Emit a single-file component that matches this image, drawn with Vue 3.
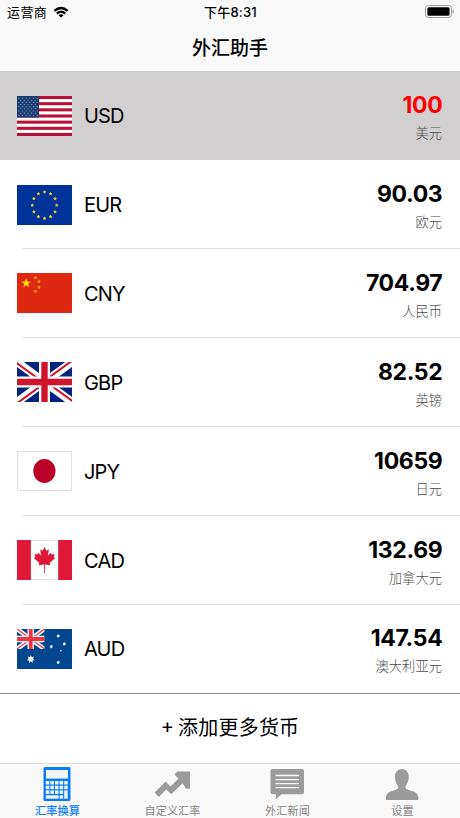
<template>
  <div class="app">
    <header class="top">
      <div class="status-bar">
        <div class="carrier">
          <span>运营商</span>
          <svg class="wifi" viewBox="0 0 16 12">
            <path d="M0.5 4.1 Q8 -2.7 15.5 4.1 L13.9 5.8 Q8 0.6 2.1 5.8 Z" />
            <path d="M3 6.7 Q8 2.3 13 6.7 L11.4 8.4 Q8 5.5 4.6 8.4 Z" />
            <path d="M5.5 9.2 Q8 7.1 10.5 9.2 L8 11.8 Z" />
          </svg>
        </div>
        <div class="clock">下午8:31</div>
        <div class="power">
          <svg class="battery" viewBox="0 0 29 13">
            <rect x="0.5" y="0.5" width="26" height="12" rx="3.2" fill="#fff" stroke="#98989a" />
            <rect x="2.4" y="2.2" width="22.2" height="8.6" rx="1.5" />
            <path d="M27.6 4.6 Q29 5 29 6.5 T27.6 8.4 Z" fill="#98989a" />
          </svg>
        </div>
      </div>
      <h1 class="title">外汇助手</h1>
    </header>

    <main class="list">
      <div
        v-for="item in currencies"
        :key="item.code"
        class="row"
        :class="{ active: item.code === selected }"
        @click="selected = item.code"
      >
        <svg class="flag" viewBox="0 0 55 40" preserveAspectRatio="none">
          <template v-if="item.code === 'USD'">
            <rect width="55" height="40" fill="#fff" />
            <rect v-for="n in 7" :key="n" y="0" width="55" height="3.08" :transform="`translate(0 ${(n - 1) * 6.154})`" fill="#b8123a" />
            <rect width="22" height="21.5" fill="#173b70" />
            <circle v-for="(s, i) in usStars" :key="'s' + i" :cx="s.x" :cy="s.y" r="0.6" fill="#9fb4cc" />
          </template>
          <template v-else-if="item.code === 'EUR'">
            <rect width="55" height="40" fill="#039" />
            <polygon v-for="(s, i) in euStars" :key="i" :points="star(s.x, s.y, 2, 5, 0.5)" fill="#f5cf2a" />
          </template>
          <template v-else-if="item.code === 'CNY'">
            <rect width="55" height="40" fill="#de2910" />
            <polygon :points="star(9.2, 10.2, 5)" fill="#ffde00" />
            <polygon v-for="(s, i) in cnStars" :key="i" :points="star(s[0], s[1], 1.9, 5, 0.45)" fill="#f9bd08" />
          </template>
          <template v-else-if="item.code === 'GBP'">
            <rect width="55" height="40" fill="#00247d" />
            <path d="M0 0 L55 40 M55 0 L0 40" stroke="#fff" stroke-width="8" />
            <path d="M0 0 L27.5 20 L27.5 22.6 L0 2.6 Z M55 0 H51.5 L27.5 17.4 V20 Z M55 40 L27.5 20 V17.4 L55 37.4 Z M0 40 H3.5 L27.5 22.6 V20 Z" fill="#cf142b" />
            <path d="M27.5 0 V40 M0 20 H55" stroke="#fff" stroke-width="11" />
            <path d="M27.5 0 V40 M0 20 H55" stroke="#cf142b" stroke-width="6.4" />
          </template>
          <template v-else-if="item.code === 'JPY'">
            <rect x="0.5" y="0.5" width="54" height="39" fill="#fff" stroke="#dedede" />
            <ellipse cx="27.4" cy="20" rx="11.1" ry="11.9" fill="#bc0026" />
          </template>
          <template v-else-if="item.code === 'CAD'">
            <rect x="0.5" y="0.5" width="54" height="39" fill="#fff" stroke="#e4e4e4" />
            <rect width="13.9" height="40" fill="#e01837" />
            <rect x="41.2" width="13.8" height="40" fill="#e01837" />
            <path
              d="M27.5 7 L29.4 10.8 L31.9 9.5 L30.8 15.8 L34 12.6 L34.6 14.4 L37.5 13.9 L36.7 17.2 L38.2 18.1 L32.7 22.9 L33.3 25.3 L27.9 24.4 V33 H27.1 V24.4 L21.7 25.3 L22.3 22.9 L16.8 18.1 L18.3 17.2 L17.5 13.9 L20.4 14.4 L21 12.6 L24.2 15.8 L23.1 9.5 L25.6 10.8 Z"
              fill="#e01837"
            />
          </template>
          <template v-else>
            <rect width="55" height="40" fill="#00478f" />
            <svg width="27.5" height="20" viewBox="0 0 27.5 20">
              <path d="M0 0 L27.5 20 M27.5 0 L0 20" stroke="#fff" stroke-width="4.4" />
              <path d="M0 0 L27.5 20 M27.5 0 L0 20" stroke="#ef3340" stroke-width="1.2" />
              <path d="M13.75 0 V20 M0 10 H27.5" stroke="#fff" stroke-width="6.4" />
              <path d="M13.75 0 V20 M0 10 H27.5" stroke="#ef3340" stroke-width="3.8" />
            </svg>
            <polygon v-for="(s, i) in auStars" :key="i" :points="star(s[0], s[1], s[2], 7, 0.5)" fill="#fff" />
          </template>
        </svg>
        <span class="code">{{ item.code }}</span>
        <div class="value">
          <span class="amount">{{ item.amount }}</span>
          <span class="name">{{ item.name }}</span>
        </div>
      </div>
    </main>

    <button class="add">
      <span>+</span>
      <span>添加更多货币</span>
    </button>

    <nav class="tabs">
      <div
        v-for="tab in tabs"
        :key="tab.id"
        class="tab"
        :class="{ active: tab.id === activeTab }"
        @click="activeTab = tab.id"
      >
        <svg class="tab-icon" viewBox="0 0 36 36">
          <template v-if="tab.id === 'calc'">
            <rect x="4.5" y="1" width="27" height="34" rx="1.5" />
            <rect x="7" y="4" width="22" height="8.6" class="hole" />
            <rect v-for="k in keypad" :key="k.x + '-' + k.y" :x="k.x" :y="k.y" :width="k.w" :height="k.h" class="hole" />
          </template>
          <path
            v-else-if="tab.id === 'custom'"
            d="M0.6 26.4 L11.6 15.5 L16.5 20.5 L24.5 12.5 L20.4 8.6 L23.2 5.4 H36 V22.8 H32 L28.7 17.2 L17.2 28.3 L12.4 23.6 L4.8 31 Z"
          />
          <template v-else-if="tab.id === 'news'">
            <path d="M3 3 H33 Q35 3 35 5 V26.3 Q35 28.3 33 28.3 H12.5 L6.8 33.3 V28.3 H3.5 Q1.5 28.3 1.5 26.3 V5 Q1.5 3 3 3 Z" />
            <path d="M6.5 9.5 H30 M6.5 13.6 H30 M6.5 17.7 H30 M6.5 21.6 H30" stroke="#f9f9f9" stroke-width="1.3" />
          </template>
          <path
            v-else
            d="M17.8 3 C22.5 3 25 6.5 24.7 11.6 C24.5 15.6 23 18.3 21.6 20.2 C21 21.5 21.5 22.6 23 23.3 C28 25.5 34.5 25.6 34.5 32.5 Q34.5 34 32.8 34 H3.2 Q1.8 34 1.8 32.5 C1.8 25.6 8 25.5 12.8 23.3 C14.3 22.6 14.7 21.5 14.1 20.2 C12.7 18.3 11.2 15.6 11 11.6 C10.7 6.5 13.2 3 17.8 3 Z"
          />
        </svg>
        <span class="tab-label">{{ tab.label }}</span>
      </div>
    </nav>
  </div>
</template>

<script setup>
import { ref } from 'vue'

const selected = ref('USD')
const activeTab = ref('calc')

const currencies = [
  { code: 'USD', amount: '100', name: '美元' },
  { code: 'EUR', amount: '90.03', name: '欧元' },
  { code: 'CNY', amount: '704.97', name: '人民币' },
  { code: 'GBP', amount: '82.52', name: '英镑' },
  { code: 'JPY', amount: '10659', name: '日元' },
  { code: 'CAD', amount: '132.69', name: '加拿大元' },
  { code: 'AUD', amount: '147.54', name: '澳大利亚元' }
]

const tabs = [
  { id: 'calc', label: '汇率换算' },
  { id: 'custom', label: '自定义汇率' },
  { id: 'news', label: '外汇新闻' },
  { id: 'settings', label: '设置' }
]

// polygon points for a star with the given centre and outer radius
const star = (cx, cy, r, tips = 5, inner = 0.4) => {
  const points = []
  for (let i = 0; i < tips * 2; i++) {
    const radius = i % 2 ? r * inner : r
    const angle = (Math.PI * i) / tips - Math.PI / 2
    points.push(`${(cx + radius * Math.cos(angle)).toFixed(2)},${(cy + radius * Math.sin(angle)).toFixed(2)}`)
  }
  return points.join(' ')
}

const usStars = []
for (let row = 0; row < 9; row++) {
  const count = row % 2 ? 5 : 6
  for (let col = 0; col < count; col++) {
    usStars.push({ x: (row % 2 ? 3.7 : 1.9) + col * 3.65, y: 2.1 + row * 2.15 })
  }
}

const euStars = Array.from({ length: 12 }, (_, i) => ({
  x: 27.5 + 12.2 * Math.cos((i * Math.PI) / 6),
  y: 20.2 + 13.2 * Math.sin((i * Math.PI) / 6)
}))

const cnStars = [[18.4, 4.7], [22, 8.5], [22, 14.3], [18.4, 18.3]]

const auStars = [
  [13.8, 30.2, 4.2],
  [41.2, 6.9, 2],
  [34.3, 17.7, 2],
  [47.3, 15, 2],
  [41.2, 33.4, 2],
  [43.9, 21.8, 1]
]

// three rows of five keys, then a wide zero key; the last column is double height
const keypad = []
for (let row = 0; row < 3; row++) {
  for (let col = 0; col < 5; col++) {
    if (row === 2 && col === 4) continue
    keypad.push({ x: 6.8 + col * 4.6, y: 15 + row * 4.7, w: 3.5, h: 3.5 })
  }
}
keypad.push({ x: 6.8, y: 29.3, w: 12.7, h: 3.4 })
keypad.push({ x: 20.6, y: 29.3, w: 3.5, h: 3.4 })
keypad.push({ x: 25.2, y: 24.4, w: 3.5, h: 8.3 })
</script>

<style>
body {
  margin: 0;
  background: #fff;
}
</style>

<style scoped>
.app {
  width: 460px;
  height: 818px;
  display: flex;
  flex-direction: column;
  overflow: hidden;
  background: #fff;
  color: #000;
  font-family: Inter, "Noto Sans CJK SC", sans-serif;
}

.top {
  height: 71px;
  flex-shrink: 0;
  background: #f9f9f9;
}

.status-bar {
  height: 24px;
  display: grid;
  grid-template-columns: 1fr auto 1fr;
  align-items: center;
  padding: 0 6px 0 7px;
  font-size: 13px;
  line-height: 24px;
}

.carrier {
  display: flex;
  align-items: center;
  gap: 6px;
  letter-spacing: 0.4px;
}

.wifi {
  width: 16px;
  height: 12px;
  margin-bottom: 1px;
}

.clock {
  font-weight: 500;
  letter-spacing: 0.2px;
}

.power {
  display: flex;
  justify-content: flex-end;
}

.battery {
  width: 29px;
  height: 13px;
  margin-bottom: 1px;
}

.title {
  margin: 0;
  padding-top: 1px;
  text-align: center;
  font-size: 19px;
  font-weight: 500;
  line-height: 48px;
  height: 46px;
}

.list {
  height: 623px;
  flex-shrink: 0;
  display: grid;
  grid-template-rows: repeat(6, 88.95px) 1fr;
  box-sizing: border-box;
  border-bottom: 1px solid #8e8e8e;
}

.row {
  display: flex;
  align-items: center;
  padding: 0 18px 0 17px;
  background: linear-gradient(#e2e2e4, #e2e2e4) 22px 100% / 100% 1px no-repeat;
  cursor: pointer;
}

.row:last-child {
  background: none;
}

.row.active {
  background: #d1cfd0;
  box-shadow: inset 0 1px #c9caca;
}

.flag {
  width: 55px;
  height: 40px;
  margin-top: 0.2px;
  flex-shrink: 0;
}

.code {
  margin-left: 12px;
  padding-top: 1px;
  font-size: 20px;
  letter-spacing: -0.8px;
}

.value {
  margin-left: auto;
  padding-top: 5px;
  display: flex;
  flex-direction: column;
  align-items: flex-end;
}

.amount {
  font-size: 23px;
  font-weight: 700;
  line-height: 27px;
  letter-spacing: -0.35px;
  margin-right: -0.35px;
}

.active .amount {
  color: #f00;
}

.name {
  margin-top: 3px;
  font-size: 13.3px;
  line-height: 22px;
  color: #4c4c4c;
  font-weight: 300;
}

.add {
  height: 69px;
  flex-shrink: 0;
  display: flex;
  justify-content: center;
  align-items: center;
  gap: 4px;
  padding: 0 0 5px;
  border: 0;
  background: #fff;
  color: #000;
  font-family: inherit;
  font-size: 20px;
  letter-spacing: 0.2px;
  cursor: pointer;
}

.tabs {
  flex: 1;
  display: grid;
  grid-template-columns: repeat(4, 1fr);
  box-sizing: border-box;
  border-top: 1px solid #dcdcdc;
  background: #f9f9f9;
}

.tab {
  display: flex;
  flex-direction: column;
  align-items: center;
  padding-top: 2px;
  color: #929292;
  cursor: pointer;
}

.tab.active {
  color: #0a7cf5;
}

.tab-icon {
  width: 36px;
  height: 36px;
  margin-right: 1px;
  fill: #9b9b9b;
}

.active .tab-icon {
  fill: #0a7cf5;
}

.tab-icon .hole {
  fill: #f0f5fa;
}

.tab-label {
  margin-top: 1px;
  font-size: 11.2px;
  line-height: 16px;
  font-weight: 500;
}

.tab:not(.active) .tab-label {
  font-weight: 400;
  color: #858585;
}
</style>
